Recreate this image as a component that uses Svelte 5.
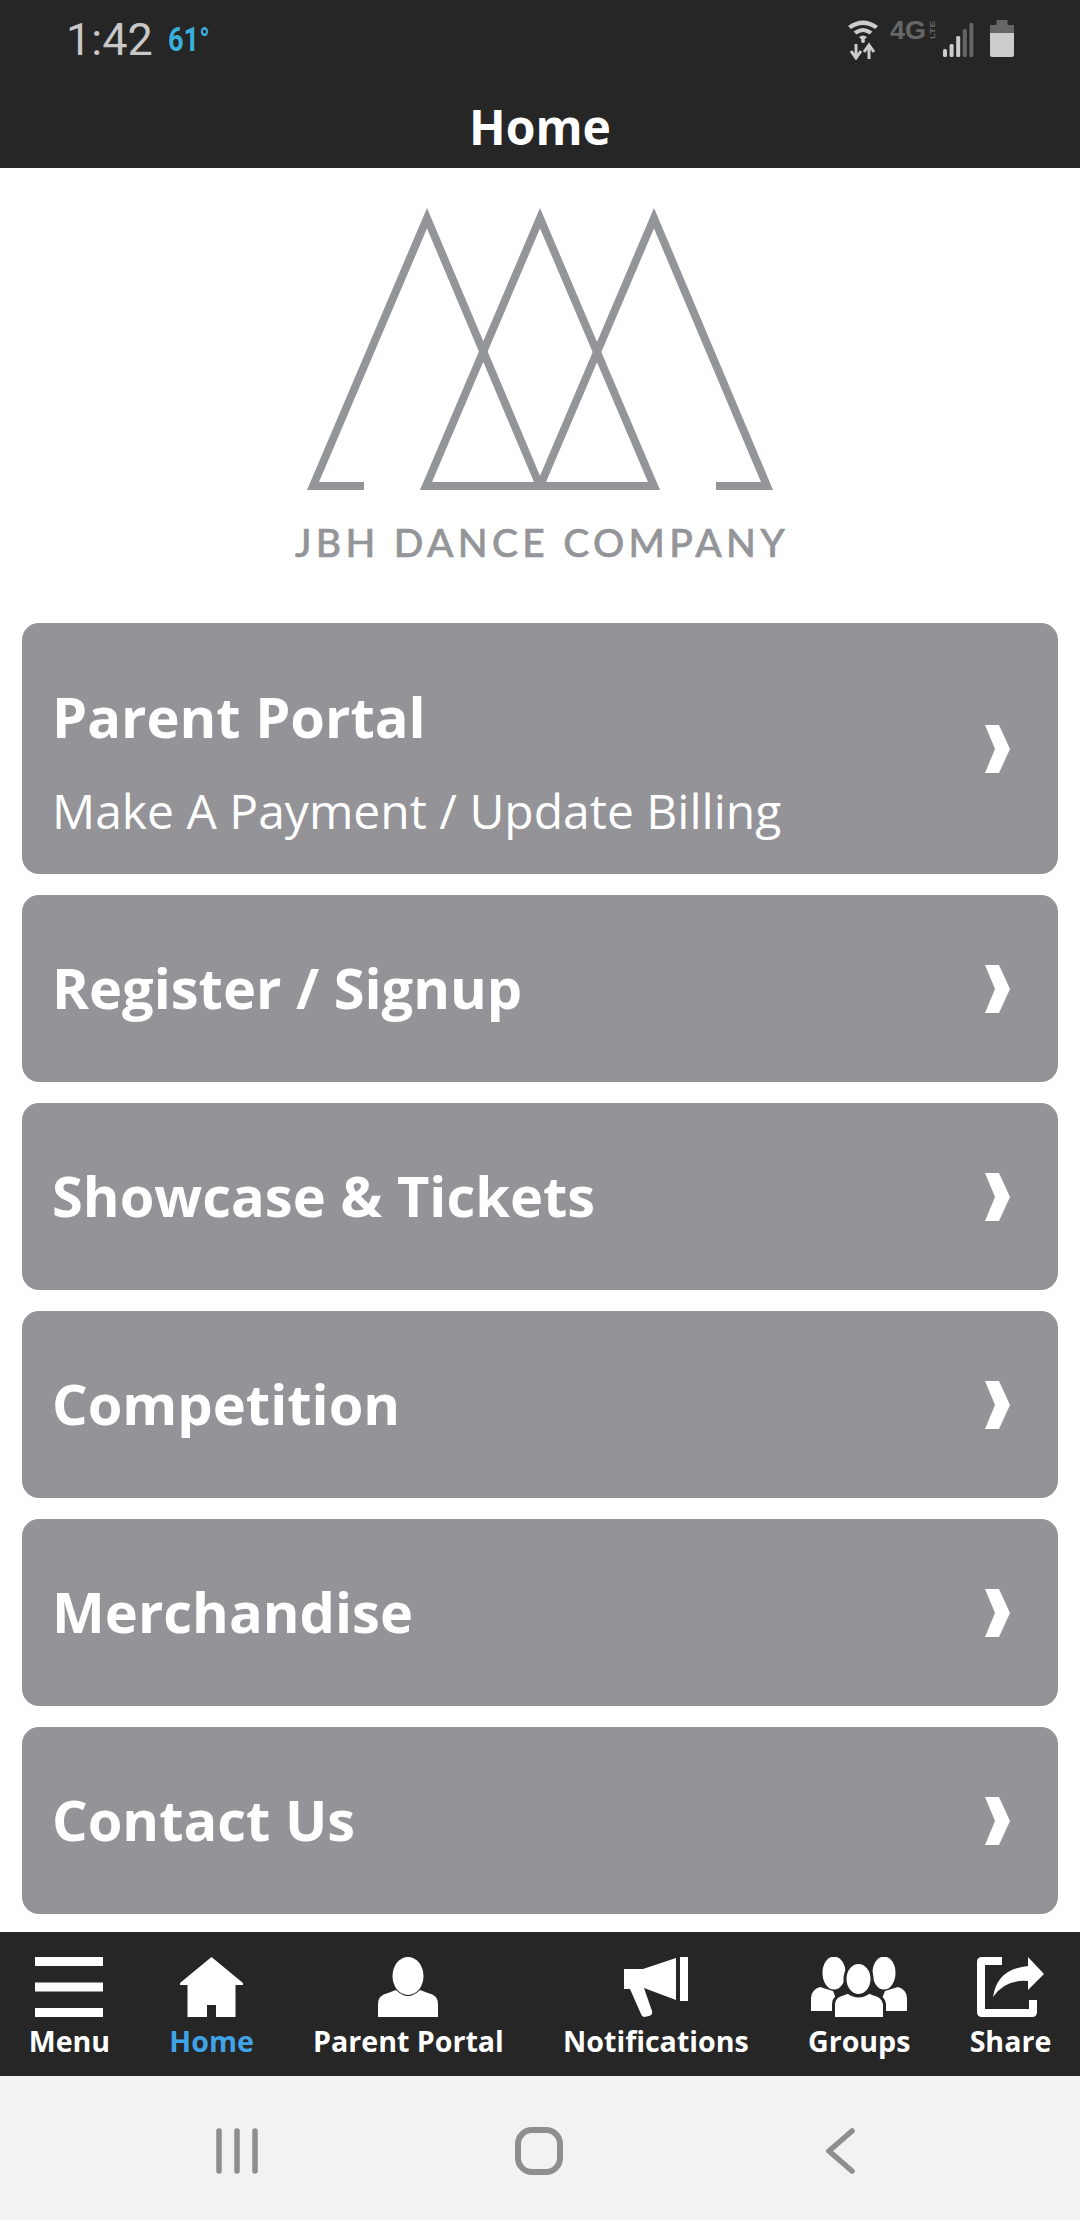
<script>
  // Home screen of the dance company app
  const cards = [
    { title: 'Parent Portal', sub: 'Make A Payment / Update Billing' },
    { title: 'Register / Signup' },
    { title: 'Showcase & Tickets' },
    { title: 'Competition' },
    { title: 'Merchandise' },
    { title: 'Contact Us' }
  ];

  const signal = [
    { x: 0, h: 8, on: true },
    { x: 6.6, h: 13, on: true },
    { x: 13.2, h: 21, on: true },
    { x: 19.8, h: 28, on: false },
    { x: 26.4, h: 34, on: false }
  ];
</script>

<div class="page">
  <header class="top">
    <div class="status">
      <span class="time">1:42</span>
      <span class="temp">61°</span>
      <div class="status-icons">
        <svg class="ic-wifi" width="32" height="41" viewBox="0 0 32 41">
          <path d="M1 7 Q16 -4 31 7 L28 10 Q16 2 4 10Z" fill="#ccc" />
          <path d="M6.5 12.5 Q16 5.5 25.5 12.5 L22.500 15.5 Q16 10.500 9.500 15.500Z" fill="#ccc" />
          <path d="M12 18 Q16 15 20 18 L16 22Z" fill="#ccc" />
          <circle cx="16" cy="22" r="2" fill="#ccc" />
          <path d="M9 25 V37 M4 32 L9 39 L14 32 M22 40 V28 M17 33 L22 26 L27 33" fill="none" stroke="#ccc" stroke-width="3" />
        </svg>
        <svg class="ic-lte" width="46" height="31" viewBox="0 0 46 31">
          <text x="0" y="24" class="four-g" textLength="36" lengthAdjust="spacingAndGlyphs">4G</text>
          <text x="0" y="0" class="lte" transform="translate(45 24) rotate(-90)" textLength="18" lengthAdjust="spacingAndGlyphs">LTE</text>
        </svg>
        <svg class="ic-signal" width="31" height="36" viewBox="0 0 31 36">
          {#each signal as bar}
            <rect x={bar.x} y={36 - bar.h} width="4" height={bar.h} rx="1.500" fill={bar.on ? '#ccc' : '#666'} />
          {/each}
        </svg>
        <svg class="ic-battery" width="24" height="37" viewBox="0 0 24 37">
          <rect x="6.500" y="0" width="11" height="6" fill="#666" />
          <rect x="0" y="5" width="24" height="9" fill="#666" />
          <path d="M0 13 H24 V35 Q24 37 22 37 H2 Q0 37 0 35Z" fill="#ccc" />
        </svg>
      </div>
    </div>
    <h1 class="title">Home</h1>
  </header>

  <div class="logo">
    <svg width="466" height="282" viewBox="307 208 466 282">
      <g fill="none" stroke="#939598" stroke-width="8" stroke-miterlimit="10">
        <path d="M364 486 H313 L427 218.200 L540 486" />
        <path d="M426 486 L540 218.200 L654 486Z" />
        <path d="M716 486 H767 L654 218.200 L540 486" />
      </g>
    </svg>
    <div class="logo-text">JBH DANCE COMPANY</div>
  </div>

  <div class="cards">
    {#each cards as card}
      <div class="card" class:tall={card.sub}>
        <div class="card-text">
          <div class="card-title">{card.title}</div>
          {#if card.sub}
            <div class="card-sub">{card.sub}</div>
          {/if}
        </div>
        <svg class="chev" width="25" height="48" viewBox="0 0 25 48">
          <path d="M0 0 H14 L25 24 L14 48 H0 L10 24Z" fill="#fff" />
        </svg>
      </div>
    {/each}
  </div>

  <nav class="tabs">
    <div class="tab">
      <svg width="68" height="60" viewBox="0 0 68 60">
        <path d="M0 0 H68 V9 H0Z M0 25.500 H68 V34.500 H0Z M0 51 H68 V60 H0Z" fill="#fff" />
      </svg>
      <span>Menu</span>
    </div>
    <div class="tab active">
      <svg width="63" height="60" viewBox="0 0 63 60">
        <path d="M31.500 0 L63 26 V28 H55.500 V60 H36 V48 H27 V60 H7.500 V28 H0 V26Z" fill="#fff" />
      </svg>
      <span>Home</span>
    </div>
    <div class="tab">
      <svg width="60" height="60" viewBox="0 0 60 60">
        <ellipse cx="30" cy="19" rx="15.500" ry="19" fill="#fff" />
        <path d="M0 60 V47 Q0 38 10 36 L18 33 Q30 45 42 33 L50 36 Q60 38 60 47 V60Z" fill="#fff" />
      </svg>
      <span>Parent Portal</span>
    </div>
    <div class="tab">
      <svg width="64" height="60" viewBox="0 0 64 60">
        <path d="M56 0 H64 V44 H56Z" fill="#fff" />
        <path d="M0 12 H19 L52 1 V43 L20 31 L28 54 Q29 58 25 59 L20 60 Q18 60 17 57 L6 32 H0Z" fill="#fff" />
      </svg>
      <span>Notifications</span>
    </div>
    <div class="tab">
      <svg width="96" height="60" viewBox="0 0 96 60">
        <g fill="#fff">
          <ellipse cx="23" cy="16" rx="11.500" ry="16.500" />
          <ellipse cx="73" cy="16" rx="11.500" ry="16.500" />
          <path d="M0 54 V41 Q0 33 9 30 L22 34 L30 54Z" />
          <path d="M96 54 V41 Q96 33 87 30 L74 34 L66 54Z" />
        </g>
        <g fill="#fff" stroke="#262626" stroke-width="3">
          <ellipse cx="47.500" cy="22" rx="13.500" ry="16.500" />
          <path d="M22.500 62 V47 Q23 39 32 37 L37 35 Q47.500 43 58 35 L63 37 Q72 39 73.500 47 V62Z" />
        </g>
      </svg>
      <span>Groups</span>
    </div>
    <div class="tab">
      <svg width="67" height="60" viewBox="0 0 67 60">
        <path d="M25 0 H5 Q0 0 0 5 V55 Q0 60 5 60 H55 Q60 60 60 55 V43 H52 V52 H8 V8 H25Z" fill="#fff" />
        <path d="M51 0 L67 17 L51 33 V24 Q28 22 16 40 Q20 12 51 9Z" fill="#fff" />
      </svg>
      <span>Share</span>
    </div>
  </nav>

  <div class="sysnav">
    <svg width="42" height="46" viewBox="0 0 42 46">
      <path d="M3 3 V43 M21 3 V43 M39 3 V43" fill="none" stroke="#8e8e8e" stroke-width="5.500" stroke-linecap="round" />
    </svg>
    <svg class="sys-home" width="48" height="48" viewBox="0 0 48 48">
      <rect x="3" y="3" width="42" height="42" rx="14" fill="none" stroke="#8e8e8e" stroke-width="6" />
    </svg>
    <svg class="sys-back" width="29" height="46" viewBox="0 0 29 46">
      <path d="M26 3 L3 23 L26 43" fill="none" stroke="#8e8e8e" stroke-width="5.500" stroke-linecap="round" />
    </svg>
  </div>
</div>

<style>
  :global(body) {
    margin: 0;
    background: #fff;
  }

  .page {
    display: flex;
    flex-direction: column;
    height: 2220px;
    overflow: hidden;
    font-family: "Open Sans", "Liberation Sans", sans-serif;
  }

  /* ===== header ===== */
  .top {
    height: 168px;
    background: #262626;
    box-sizing: border-box;
  }

  .status {
    display: flex;
    align-items: center;
    height: 78px;
    padding: 0 66px 0 66px;
  }

  .time {
    font: 400 45px Roboto, sans-serif;
    color: #c8c8c8;
  }

  .temp {
    margin-left: 15px;
    font: 700 34px Roboto, sans-serif;
    color: #3ab0dd;
    transform: scaleX(0.8);
    transform-origin: left center;
  }

  .status-icons {
    display: flex;
    align-items: flex-start;
    margin-left: auto;
  }

  .ic-lte { margin: -4px 0 0 11px; }
  .ic-signal { margin: 2px 0 0 7px; }
  .ic-battery { margin: 1px 0 0 16px; }

  .four-g {
    font: 700 25px "Liberation Sans", sans-serif;
    fill: #666;
  }

  .lte {
    font: 700 8px "Liberation Sans", sans-serif;
    fill: #666;
  }

  .title {
    margin: 17px 0 0;
    text-align: center;
    font-size: 48px;
    font-weight: 700;
    line-height: 64px;
    color: #fff;
  }

  /* ===== logo ===== */
  .logo {
    display: flex;
    flex-direction: column;
    align-items: center;
    height: 455px;
    padding-top: 40px;
    box-sizing: border-box;
  }

  .logo svg {
    display: block;
  }

  .logo-text {
    margin-top: 29px;
    padding-left: 4px;
    font-family: Lato, sans-serif;
    font-size: 39px;
    font-weight: 500;
    line-height: 46px;
    letter-spacing: 4.300px;
    -webkit-text-stroke: 0.6px #939598;
    color: #939598;
    white-space: nowrap;
  }

  /* ===== menu cards ===== */
  .cards {
    display: flex;
    flex-direction: column;
    gap: 21px;
    padding: 0 22px;
  }

  .card {
    display: flex;
    align-items: center;
    justify-content: space-between;
    height: 187px;
    padding: 0 48px 0 30px;
    border-radius: 17px;
    background: #939398;
    color: #fff;
  }

  .card-text {
    padding-bottom: 3px;
  }

  .card.tall {
    height: 251px;
  }

  .card.tall .card-text {
    padding: 22px 0 0;
  }

  .card-title {
    font-size: 56px;
    font-weight: 700;
    line-height: 76px;
  }

  .card-sub {
    margin-top: 26px;
    font-size: 48px;
    font-weight: 400;
    line-height: 62px;
  }

  .chev {
    flex: none;
  }

  /* ===== bottom tabs ===== */
  .tabs {
    display: flex;
    justify-content: center;
    margin-top: auto;
    height: 144px;
    background: #262626;
  }

  .tab {
    display: flex;
    flex-direction: column;
    align-items: center;
    padding: 25px 29.600px 0;
    color: #fff;
    font-size: 28.600px;
    font-weight: 700;
    line-height: 38px;
    white-space: nowrap;
  }

  .tab svg {
    display: block;
    margin-bottom: 5px;
  }

  .tab.active span {
    color: #3fa3e6;
  }

  /* ===== system navigation ===== */
  .sysnav {
    display: flex;
    align-items: center;
    height: 144px;
    padding: 6px 0 0 216px;
    box-sizing: border-box;
    background: #f2f2f2;
  }

  .sys-home {
    margin-left: 257px;
  }

  .sys-back {
    margin-left: 263px;
  }
</style>
